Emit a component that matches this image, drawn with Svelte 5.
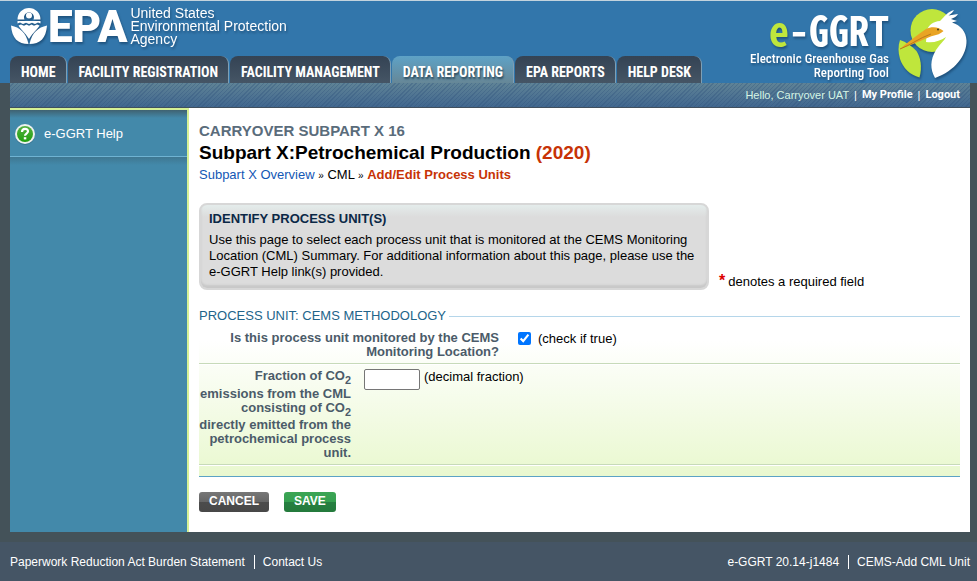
<script>
  const tabs = ['HOME', 'FACILITY REGISTRATION', 'FACILITY MANAGEMENT', 'DATA REPORTING', 'EPA REPORTS', 'HELP DESK'];
  const current = 'DATA REPORTING';
  let monitored = $state(true);
  let fraction = $state('');
</script>

<div class="page">
  <header>
    <div class="brand">
      <svg class="flower" viewBox="0 0 38 40" aria-hidden="true">
        <path d="M7.500 12.500a11.500 11.500 0 0 1 23 0H23.500a5 5 0 1 0-9 0z" />
        <circle cx="19" cy="8.500" r="3" />
        <path d="M7.500 14h23v2.500l-2.500-1-3 1.500-3-1.200-3 1.200-3-1.200-3 1.200-3-1.500-2.500 1z" />
        <path d="M8.500 18.500l2.500-1 3 1.300 2.500-1.300 2.500 1.300 2.500-1.300 2.500 1.300 3-1.300 2.500 1c-1.500 3-6.500 7-10.500 13.500-4-6.500-9-10.500-10.500-13.500z" />
        <path d="M1 18.500c9 2 15 7 17.500 18.500C8 37 2 31.500 1 18.500z" />
        <path d="M37 18.500c-9 2-15 7-17.500 18.500C30 37 36 31.500 37 18.500z" />
      </svg>
      <span class="epa">EPA</span>
      <span class="agency">United States<br />Environmental Protection<br />Agency</span>
    </div>
    <div class="product">
      <div class="wordmark">
        <div class="name"><span>e</span>-GGRT</div>
        <div class="tagline">Electronic Greenhouse Gas<br />Reporting Tool</div>
      </div>
      <svg class="bird" viewBox="0 0 72 72" aria-hidden="true">
        <circle cx="35" cy="22.500" r="21.500" fill="#bfe63c" />
        <path d="M3 32C9 34 15 38 19.500 43c4 6 6 16 3 26.500C13 67 6 60 3 51c-2-7-2-13 0-19z" fill="#bfe63c" />
        <path d="M30 22c2-5 6-8.500 13-9 5-5 8-9.500 14-11-1 2-3 4-5.500 5.500L61 6c-1 2-4 4-7 5l6 2-5 1.500c9 3 14 9 14.500 18C70 47 58 63 38 70c-5-9-5-18 1-28 4-6 8-9 10-13-6 4-12 6-20 5z" fill="#fff" />
        <path d="M3 41C11 34 20 27 29 21c6-3 13-2 17.500 2-4 4-9 4-14 6C21 34 12 38 3 41z" fill="#e9a424" />
        <path d="M3 41C14 37 22 30 34 26" fill="none" stroke="#b9791c" />
        <circle cx="41" cy="21.500" r="1" fill="#3c3520" />
      </svg>
    </div>
    <nav>
      {#each tabs as tab}
        <a href="#top" class:active={tab === current} aria-current={tab === current ? 'page' : undefined}>{tab}</a>
      {/each}
    </nav>
  </header>

  <div class="frame">
    <div class="userbar">
      <span class="hello">Hello, Carryover UAT</span><i>|</i><a href="#profile">My Profile</a><i>|</i><a href="#logout">Logout</a>
    </div>
    <div class="columns">
      <aside>
        <a href="#help">
          <svg viewBox="0 0 22 22" aria-hidden="true">
            <defs>
              <linearGradient id="help-fill" x2="0" y2="1"><stop stop-color="#55b043" /><stop offset="1" stop-color="#20a00d" /></linearGradient>
            </defs>
            <circle cx="11" cy="12" r="10" fill="#2b6079" opacity=".5" />
            <circle cx="11" cy="11" r="10" fill="#eef1ef" />
            <circle cx="11" cy="11" r="8" fill="url(#help-fill)" />
            <path d="M8 9c0-4 6-4 6-.7 0 2.200-3 2.300-3 4.400" fill="none" stroke="#fff" stroke-width="2.200" />
            <rect x="9.800" y="14.200" width="2.500" height="2.200" fill="#fff" />
          </svg>
          e-GGRT Help
        </a>
      </aside>
      <main>
        <h2>CARRYOVER SUBPART X 16</h2>
        <h1>Subpart X:Petrochemical Production <em>(2020)</em></h1>
        <div class="crumbs"><a href="#overview">Subpart X Overview</a> <small>»</small> CML <small>»</small> <strong>Add/Edit Process Units</strong></div>

        <div class="intro">
          <section>
            <h3>IDENTIFY PROCESS UNIT(S)</h3>
            <p>Use this page to select each process unit that is monitored at the CEMS Monitoring Location (CML) Summary. For additional information about this page, please use the <span>e-GGRT</span> Help link(s) provided.</p>
          </section>
          <div class="required"><b>*</b>denotes a required field</div>
        </div>

        <form onsubmit={(event) => event.preventDefault()}>
          <fieldset>
            <legend>PROCESS UNIT: CEMS METHODOLOGY</legend>
            <div class="row check">
              <label for="monitored">Is this process unit monitored by the CEMS Monitoring Location?</label>
              <input id="monitored" type="checkbox" bind:checked={monitored} />
              <span>(check if true)</span>
            </div>
            <div class="row fraction">
              <label for="fraction">Fraction of CO<sub>2</sub> emissions from the CML consisting of CO<sub>2</sub> directly emitted from the petrochemical process unit.</label>
              <input id="fraction" type="text" bind:value={fraction} />
              <span>(decimal fraction)</span>
            </div>
          </fieldset>
          <div class="actions">
            <button type="button" class="cancel">CANCEL</button>
            <button type="submit" class="save">SAVE</button>
          </div>
        </form>
      </main>
    </div>
  </div>

  <footer>
    <div><a href="#burden">Paperwork Reduction Act Burden Statement</a><a href="#contact">Contact Us</a></div>
    <div><span>e-GGRT 20.14-j1484</span><span>CEMS-Add CML Unit</span></div>
  </footer>
</div>

<style>
  :global(body) { background: #455565; }
  .page { font: 13px/16px "Liberation Sans", Arial, sans-serif; color: #000; background: #445259; }
  a { text-decoration: none; color: inherit; }
  h1, h2, h3, p { margin: 0; }

  header {
    display: grid;
    grid-template-columns: 1fr auto;
    grid-template-rows: 55px 27px;
    height: 82px;
    border-top: 1px solid #c3d3dd;
    background: #3276ab;
    color: #fff;
  }
  .brand { display: flex; align-items: flex-start; padding: 6px 0 0 10px; filter: drop-shadow(1px 2px 1px #1f527d); white-space: nowrap; }
  .flower { width: 38px; height: 40px; fill: #fff; }
  .epa { font: 900 44px/40px Roboto, "Liberation Sans", sans-serif; }
  .agency { padding-left: 3px; font: 14px/13px "Liberation Sans", Arial, sans-serif; }
  .product { grid-row: 1 / 3; grid-column: 2; display: flex; gap: 8px; padding: 7px 8px 0 0; filter: drop-shadow(1px 2px 1px #1f527d); white-space: nowrap; }
  .wordmark { text-align: right; }
  .name { font: 900 40px/42px "Noto Sans Mono CJK SC", Roboto, sans-serif; }
  .name span { color: #bfe63c; }
  .tagline { padding-top: 2px; font: 500 13px/14px "Roboto Condensed", Roboto, sans-serif; }
  .bird { width: 72px; height: 72px; }
  nav { display: flex; gap: 1px; padding-left: 10px; }
  nav a {
    padding: 0 10px 0 11px;
    border-right: 1px solid #7f9fb4;
    border-radius: 8px 8px 0 0;
    background: linear-gradient(#344354, #455565);
    font: bold 14px/32px "Roboto Condensed", Roboto, sans-serif;
    white-space: nowrap;
  }
  nav .active { background: linear-gradient(#5ea2c6, #668797); text-shadow: 1px 2px 2px #2b4a5c; }

  .frame { padding: 0 7px 10px 10px; background: #445259; }
  .userbar {
    display: flex;
    justify-content: flex-end;
    padding: 4px 10px;
    border-bottom: 1px solid #404f5e;
    background: repeating-linear-gradient(135deg, #0000 0 2px, #2f527c55 2px 3px), linear-gradient(#5f8396, #41678f);
    color: #fff;
    font-size: 11px;
  }
  .userbar a { font-family: Roboto, sans-serif; font-weight: bold; }
  .userbar i { padding: 0 5px; font-style: normal; }
  .hello { color: #d5f5e4; }

  .columns { display: flex; background: #fff; }
  aside { width: 177px; border-top: 2px solid #d5f096; border-right: 2px solid #d5f096; background: #4389aa; }
  aside a { display: flex; align-items: center; gap: 8px; padding: 13px 4px 11px; color: #fff; border-bottom: 1px solid #6fb3d2; background: linear-gradient(#3f6271, #4389aa 8px); }
  aside::after { content: ""; display: block; height: 8px; background: linear-gradient(#3f7791, #4389aa); }
  aside svg { width: 22px; height: 22px; }
  main { flex: 1; padding: 14px 10px 20px; }
  h2 { font-size: 15px; line-height: 18px; color: #5a6c7b; }
  h1 { font-size: 19px; line-height: 25px; }
  h1 em { font-style: normal; color: #c73306; }
  .crumbs { line-height: 20px; }
  .crumbs a { color: #1357b5; }
  .crumbs strong { color: #c73306; }
  .crumbs small { font-size: 10px; }

  .intro { display: flex; align-items: flex-end; gap: 10px; padding-top: 17px; }
  section { width: 490px; padding: 6px 8px 8px; border: 2px solid #d7d7d7; border-radius: 8px; background: linear-gradient(#e4eceb, #dcdcdc 12px); box-shadow: inset 0 -3px 2px #c8c8c8; }
  h3 { font-size: 13px; line-height: 16px; color: #0b2846; padding-bottom: 5px; }
  p span { white-space: nowrap; }
  .required b { padding-right: 3px; color: #d00; font-size: 16px; }

  fieldset { margin: 18px 0 0; padding: 0 0 11px; border: 0; border-top: 1px solid #b5d6ea; border-bottom: 1px solid #5ba3c5; background: linear-gradient(#fff 15%, #e9f8cf) padding-box; }
  legend { padding: 0 3px 0 0; color: #22648a; }
  .row { display: flex; align-items: flex-start; border-bottom: 1px solid #c7dab9; box-shadow: 0 1px #fff; }
  .row label { flex: none; text-align: right; font-weight: bold; line-height: 14px; color: #4b5b69; }
  .row sub { line-height: 14px; }
  .check { padding: 7px 0 4px; }
  .check label { width: 300px; }
  .check input { width: 13px; height: 13px; margin: 1px 7px 0 19px; }
  .fraction { padding: 5px 0 4px; }
  .fraction label { width: 152px; }
  .fraction input { box-sizing: border-box; width: 56px; height: 21px; margin: 0 4px 0 13px; border: 1px solid #767676; border-radius: 2px; }
  .actions { display: flex; gap: 15px; padding-top: 15px; }
  button { padding: 0 10px 2px; border: 0; border-radius: 3px; color: #fff; font: bold 12px/18px "Liberation Sans", Arial, sans-serif; }
  .cancel { background: linear-gradient(#777, #666 50%, #4c4c4c 50%, #484848); }
  .save { background: linear-gradient(#3ba554, #36a050 50%, #268041 50%, #247a3c); }

  footer { display: flex; justify-content: space-between; padding: 12px 7px 11px 10px; background: #455565; color: #fff; font-size: 12px; }
  footer div > * + * { margin-left: 9px; padding-left: 8px; border-left: 1px solid #fff; }
</style>
